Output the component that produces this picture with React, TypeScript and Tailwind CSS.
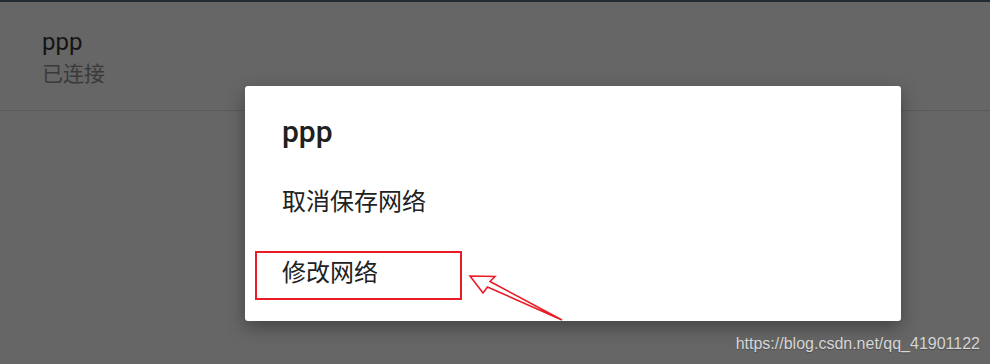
export default function App() {
  return (
    <div className="relative w-[990px] h-[364px] overflow-hidden bg-[#666666] font-['Roboto','Noto_Sans_CJK_SC',sans-serif]">
      <div className="h-[2px] bg-[#242a31]" />
      <div className="flex flex-col pl-[42px] pt-[28px] h-[109px] border-b border-[#5a5a5a]">
        <span className="text-[24px] leading-[24px] text-[#141414]">ppp</span>
        <span className="mt-[10px] text-[21px] leading-[21px] text-[#3a3a3a]">已连接</span>
      </div>

      {/* dialog */}
      <div className="absolute left-[245px] top-[86px] w-[656px] h-[235px] rounded-[3px] bg-white shadow-[0_6px_18px_rgba(0,0,0,0.35)] flex flex-col pt-[31px] pl-[37px]">
        <div className="text-[30px] leading-[30px] font-medium text-[#212121]">ppp</div>
        <div className="mt-[19px] h-[71px] flex items-center text-[24px] leading-[24px] text-[#212121]">
          取消保存网络
        </div>
        <div className="h-[71px] flex items-center text-[24px] leading-[24px] text-[#212121]">
          修改网络
        </div>
        <div className="absolute left-[10px] top-[165px] w-[207px] h-[49px] border-2 border-[#ea1d27]" />
      </div>

      {/* annotation arrow */}
      <svg className="absolute left-0 top-0" width="990" height="364" viewBox="0 0 990 364">
        <polygon
          points="470,276 495,276.5 490,281.5 562,320 487.5,287 483,293"
          fill="none"
          stroke="#ea1d27"
          strokeWidth="1.6"
          strokeLinejoin="miter"
        />
      </svg>

      <div className="absolute right-[10px] top-[334px] font-['Liberation_Sans',Arial,sans-serif] text-[16px] leading-[20px] text-[#d6d6d6] [text-shadow:0_1px_1px_rgba(0,0,0,0.25)]">
        https://blog.csdn.net/qq_41901122
      </div>
    </div>
  );
}
